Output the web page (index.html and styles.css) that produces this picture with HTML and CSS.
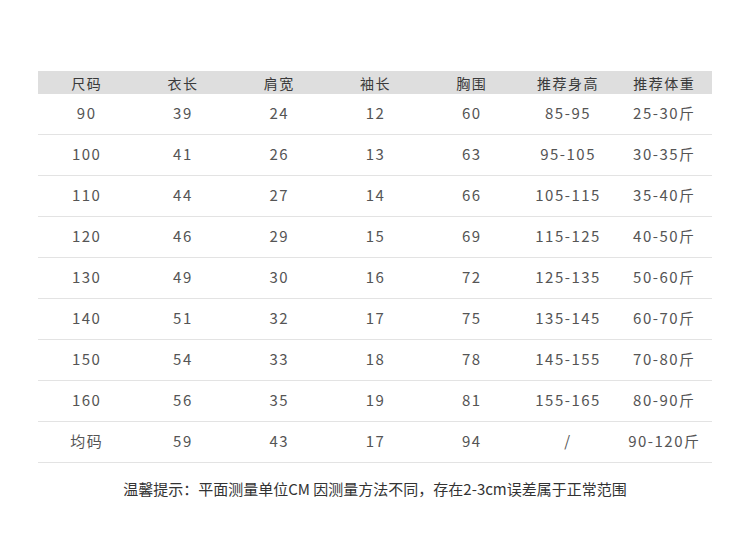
FILE: index.html
```html
<!DOCTYPE html>
<html lang="zh-CN">
<head>
<meta charset="utf-8">
<link rel="stylesheet" href="styles.css">
</head>
<body>
<div class="page">
  <div class="table">
    <div class="row head">
      <div>尺码</div><div>衣长</div><div>肩宽</div><div>袖长</div><div>胸围</div><div>推荐身高</div><div>推荐体重</div>
    </div>
    <div class="row"><div>90</div><div>39</div><div>24</div><div>12</div><div>60</div><div>85-95</div><div>25-30斤</div></div>
    <div class="row"><div>100</div><div>41</div><div>26</div><div>13</div><div>63</div><div>95-105</div><div>30-35斤</div></div>
    <div class="row"><div>110</div><div>44</div><div>27</div><div>14</div><div>66</div><div>105-115</div><div>35-40斤</div></div>
    <div class="row"><div>120</div><div>46</div><div>29</div><div>15</div><div>69</div><div>115-125</div><div>40-50斤</div></div>
    <div class="row"><div>130</div><div>49</div><div>30</div><div>16</div><div>72</div><div>125-135</div><div>50-60斤</div></div>
    <div class="row"><div>140</div><div>51</div><div>32</div><div>17</div><div>75</div><div>135-145</div><div>60-70斤</div></div>
    <div class="row"><div>150</div><div>54</div><div>33</div><div>18</div><div>78</div><div>145-155</div><div>70-80斤</div></div>
    <div class="row"><div>160</div><div>56</div><div>35</div><div>19</div><div>81</div><div>155-165</div><div>80-90斤</div></div>
    <div class="row"><div>均码</div><div>59</div><div>43</div><div>17</div><div>94</div><div>/</div><div>90-120斤</div></div>
  </div>
  <p class="note">温馨提示：平面测量单位CM 因测量方法不同，存在2-3cm误差属于正常范围</p>
</div>
</body>
</html>
```
FILE: styles.css
```css
html, body {
  margin: 0;
  padding: 0;
  background: #ffffff;
}
.page {
  padding: 71px 0 0 38px;
  font-family: "Noto Sans CJK SC", "Noto Sans", sans-serif;
}
.table {
  width: 674px;
}
.row {
  display: grid;
  grid-template-columns: repeat(7, 1fr);
  height: 40px;
  padding-bottom: 2px;
  box-sizing: border-box;
  height: 41px;
  border-bottom: 1px solid #e3e3e3;
  align-items: center;
  text-align: center;
  font-size: 15px;
  letter-spacing: 1.5px;
  color: #555555;
}
.row > div {
  line-height: 20px;
  padding-left: 1px;
}
.row.head {
  height: 23px;
  padding-bottom: 0;
  border-bottom: none;
  background: #dedede;
  color: #3a3a3a;
  font-size: 14px;
}
.note {
  margin: 15px 0 0 0;
  width: 674px;
  text-align: center;
  font-size: 15px;
  line-height: 22px;
  color: #333333;
}
```
